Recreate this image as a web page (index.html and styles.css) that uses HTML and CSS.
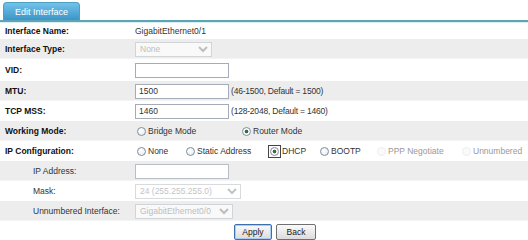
FILE: index.html
```html
<!DOCTYPE html>
<html>
<head>
  <title>Edit Interface</title>
  <link rel="stylesheet" href="styles.css">
</head>
<body>
  <div class="tabs">
    <div class="tab">Edit Interface</div>
  </div>
  <table class="form">
    <colgroup>
      <col class="col-label">
      <col>
    </colgroup>
    <tr class="first">
      <td class="label">Interface Name:</td>
      <td class="value">GigabitEthernet0/1</td>
    </tr>
    <tr class="alt">
      <td class="label">Interface Type:</td>
      <td class="value"><select class="sel sel-type" disabled><option>None</option></select></td>
    </tr>
    <tr class="tall">
      <td class="label">VID:</td>
      <td class="value"><input type="text" class="txt"></td>
    </tr>
    <tr class="alt">
      <td class="label">MTU:</td>
      <td class="value"><input type="text" class="txt" value="1500"><span class="hint">(46-1500, Default = 1500)</span></td>
    </tr>
    <tr>
      <td class="label">TCP MSS:</td>
      <td class="value"><input type="text" class="txt" value="1460"><span class="hint">(128-2048, Default = 1460)</span></td>
    </tr>
    <tr class="alt">
      <td class="label">Working Mode:</td>
      <td class="value">
        <div class="radios">
          <label class="opt w-bridge"><input type="radio" name="mode">Bridge Mode</label>
          <label class="opt"><input type="radio" name="mode" checked>Router Mode</label>
        </div>
      </td>
    </tr>
    <tr>
      <td class="label">IP Configuration:</td>
      <td class="value">
        <div class="radios">
          <label class="opt w-none"><input type="radio" name="ip">None</label>
          <label class="opt w-static"><input type="radio" name="ip">Static Address</label>
          <label class="opt w-dhcp"><span class="focus-box"><input type="radio" name="ip" checked></span>DHCP</label>
          <label class="opt w-bootp"><input type="radio" name="ip">BOOTP</label>
          <label class="opt w-ppp off"><input type="radio" name="ip" disabled>PPP Negotiate</label>
          <label class="opt off"><input type="radio" name="ip" disabled>Unnumbered</label>
        </div>
      </td>
    </tr>
    <tr class="alt">
      <td class="label sub">IP Address:</td>
      <td class="value"><input type="text" class="txt" disabled></td>
    </tr>
    <tr>
      <td class="label sub">Mask:</td>
      <td class="value"><select class="sel sel-mask" disabled><option>24 (255.255.255.0)</option></select></td>
    </tr>
    <tr class="alt">
      <td class="label sub">Unnumbered Interface:</td>
      <td class="value"><select class="sel sel-unnum" disabled><option>GigabitEthernet0/0</option></select></td>
    </tr>
  </table>
  <div class="buttons">
    <button type="button" class="btn btn-apply">Apply</button>
    <button type="button" class="btn btn-back">Back</button>
  </div>
</body>
</html>
```

FILE: styles.css
```css
html, body {
  margin: 0;
  padding: 0;
  background: #fff;
  font-family: Arial, "Liberation Sans", sans-serif;
  font-size: 8.5px;
  color: #333;
}
.tabs {
  height: 18px;
  padding-top: 2px;
  padding-left: 3px;
  border-bottom: 2px solid #5ea4b4;
  box-shadow: 0 1px 0 #d8f0f4;
}
.tab {
  width: 77px;
  height: 18px;
  box-sizing: border-box;
  border: 1px solid #4d9fc4;
  border-bottom: none;
  border-radius: 4px 4px 0 0;
  background: linear-gradient(#72c2ea, #3c95c8);
  color: #fff;
  text-align: center;
  line-height: 18px;
  font-size: 9px;
}
.form {
  width: 100%;
  table-layout: fixed;
  border-collapse: collapse;
}
.col-label {
  width: 135px;
}
.form td {
  padding: 0;
  height: 20px;
  vertical-align: middle;
  white-space: nowrap;
  overflow: hidden;
}
.form tr.first td {
  height: 17px;
}
.form tr.tall td {
  height: 22px;
}
.form tr.alt td {
  background: #ededed;
  box-shadow: inset 0 -1px 0 #f4f4f4;
}
.label {
  padding-left: 5px !important;
  font-weight: bold;
  color: #111;
}
.label.sub {
  padding-left: 33px !important;
  font-weight: normal;
  color: #333;
}
.txt {
  width: 94px;
  height: 15px;
  box-sizing: border-box;
  border: 1px solid #a5acb5;
  padding: 0 3px;
  font-family: inherit;
  font-size: 8.5px;
  color: #333;
  background: #fff;
  vertical-align: middle;
  margin: 0;
}
.txt:disabled {
  background: #fff;
  border-color: #b8bec6;
}
.hint {
  margin-left: 2px;
  vertical-align: middle;
  letter-spacing: -0.2px;
}
.sel {
  height: 15px;
  box-sizing: border-box;
  border: 1px solid #c8ccd0;
  background: #fff;
  color: #aaa;
  font-family: inherit;
  font-size: 8.5px;
  padding: 0;
  margin: 0;
  vertical-align: middle;
}
.sel-type { width: 77px; }
.sel-mask { width: 106px; }
.sel-unnum { width: 98px; }
.radios {
  display: flex;
  align-items: center;
}
.opt {
  display: flex;
  align-items: center;
  flex: none;
  white-space: nowrap;
}
.opt input {
  appearance: none;
  -webkit-appearance: none;
  width: 9px;
  height: 9px;
  box-sizing: border-box;
  margin: 0 2px 0 2px;
  border: 1px solid #7f8f9c;
  border-radius: 50%;
  background: radial-gradient(circle at 40% 40%, #fff, #e4e8ea);
}
.opt input:checked {
  background: radial-gradient(circle, #3f6a3f 0, #3f6a3f 1.6px, #fff 2.2px, #e4e8ea 100%);
}
.focus-box {
  display: flex;
  margin: 0 1px 0 0;
  padding: 1px;
  border: 1px solid #444;
}
.focus-box input {
  margin: 0;
}
.w-bridge { width: 105px; }
.w-none { width: 49px; }
.w-static { width: 84px; }
.w-dhcp { width: 50px; }
.w-bootp { width: 57px; }
.w-ppp { width: 85px; }
.opt.off {
  color: #999;
}
.opt.off input {
  border-color: #eee;
  background: #fafafa;
}
.buttons {
  display: flex;
  justify-content: center;
  gap: 4px;
  padding: 3px 0 0 22px;
}
.btn {
  height: 16px;
  box-sizing: border-box;
  padding: 0;
  border: 1px solid #707070;
  border-radius: 2px;
  background: linear-gradient(#fafafa, #dcdcdc);
  font-family: inherit;
  font-size: 8.5px;
  color: #222;
}
.btn-apply {
  width: 38px;
  border-color: #3a6fb0;
  box-shadow: inset 0 0 0 1px #a8cdf0;
}
.btn-back {
  width: 40px;
}
```
